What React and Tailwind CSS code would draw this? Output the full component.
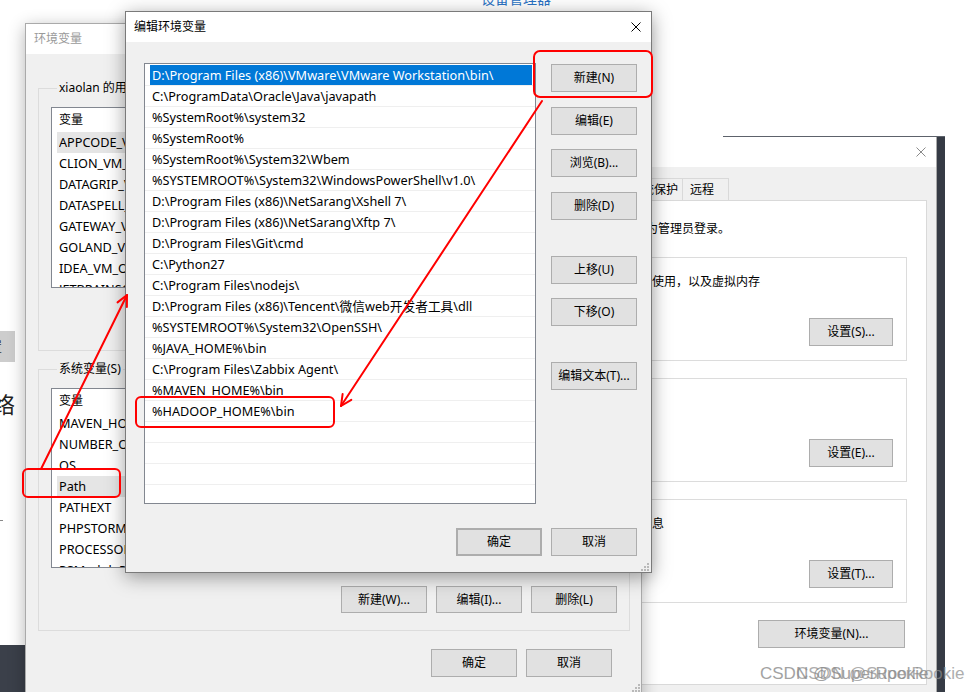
import React from 'react';

const FONT = "font-['Noto_Sans','Noto_Sans_CJK_SC',sans-serif]";

const PATHS = [
  'D:\\Program Files (x86)\\VMware\\VMware Workstation\\bin\\',
  'C:\\ProgramData\\Oracle\\Java\\javapath',
  '%SystemRoot%\\system32',
  '%SystemRoot%',
  '%SystemRoot%\\System32\\Wbem',
  '%SYSTEMROOT%\\System32\\WindowsPowerShell\\v1.0\\',
  'D:\\Program Files (x86)\\NetSarang\\Xshell 7\\',
  'D:\\Program Files (x86)\\NetSarang\\Xftp 7\\',
  'D:\\Program Files\\Git\\cmd',
  'C:\\Python27',
  'C:\\Program Files\\nodejs\\',
  'D:\\Program Files (x86)\\Tencent\\微信web开发者工具\\dll',
  '%SYSTEMROOT%\\System32\\OpenSSH\\',
  '%JAVA_HOME%\\bin',
  'C:\\Program Files\\Zabbix Agent\\',
  '%MAVEN_HOME%\\bin',
  '%HADOOP_HOME%\\bin',
];

const USER_VARS = [
  ['APPCODE_VM_OPTIONS', 'D:\\JetBrains\\vmoptions\\appcode.vmoptions'],
  ['CLION_VM_OPTIONS', 'D:\\JetBrains\\vmoptions\\clion.vmoptions'],
  ['DATAGRIP_VM_OPTIONS', 'D:\\JetBrains\\vmoptions\\datagrip.vmoptions'],
  ['DATASPELL_VM_OPTIONS', 'D:\\JetBrains\\vmoptions\\dataspell.vmoptions'],
  ['GATEWAY_VM_OPTIONS', 'D:\\JetBrains\\vmoptions\\gateway.vmoptions'],
  ['GOLAND_VM_OPTIONS', 'D:\\JetBrains\\vmoptions\\goland.vmoptions'],
  ['IDEA_VM_OPTIONS', 'D:\\JetBrains\\vmoptions\\idea.vmoptions'],
  ['JETBRAINSCLIENT_VM_OPTIONS', 'D:\\JetBrains\\vmoptions\\jetbrainsclient.vmoptions'],
];

const SYS_VARS = [
  ['MAVEN_HOME', 'D:\\apache-maven-3.6.3'],
  ['NUMBER_OF_PROCESSORS', '8'],
  ['OS', 'Windows_NT'],
  ['Path', 'D:\\Program Files (x86)\\VMware\\VMware Workstation\\bin\\;C:\\ProgramData\\...'],
  ['PATHEXT', '.COM;.EXE;.BAT;.CMD;.VBS;.VBE;.JS;.JSE;.WSF;.WSH;.MSC'],
  ['PHPSTORM_VM_OPTIONS', 'D:\\JetBrains\\vmoptions\\phpstorm.vmoptions'],
  ['PROCESSOR_ARCHITECTURE', 'AMD64'],
  ['PSModulePath', '%ProgramFiles%\\WindowsPowerShell\\Modules'],
];

function XIcon({ color }) {
  return (
    <svg width="10" height="10" viewBox="0 0 10 10">
      <path d="M0.5 0.5 L9.5 9.5 M9.5 0.5 L0.5 9.5" stroke={color} strokeWidth="1" fill="none" />
    </svg>
  );
}

function Grip() {
  return (
    <svg width="9" height="9" viewBox="0 0 9 9" fill="#b9b9b9">
      <rect x="7" y="1" width="2" height="2" />
      <rect x="4" y="4" width="2" height="2" />
      <rect x="7" y="4" width="2" height="2" />
      <rect x="1" y="7" width="2" height="2" />
      <rect x="4" y="7" width="2" height="2" />
      <rect x="7" y="7" width="2" height="2" />
    </svg>
  );
}

function Btn({ children, className = '' }) {
  return (
    <div
      className={
        'flex items-center justify-center border border-[#adadad] bg-[#e1e1e1] text-[12px] leading-none text-black whitespace-nowrap ' +
        className
      }
    >
      {children}
    </div>
  );
}

function VarList({ items, selected, className }) {
  return (
    <div className={'border border-[#828790] bg-white overflow-hidden text-[12.7px] text-black ' + className}>
      <div className="h-[24px] flex items-center text-[12px]">
        <div className="w-[180px] shrink-0 h-full pl-[7px] flex items-center border-r border-[#e5e5e5]">变量</div>
        <div className="pl-[7px]">值</div>
      </div>
      {items.map(([k, v], i) => (
        <div key={k} className="h-[21px] pl-[5px]">
          <div
            className={
              (i === selected ? 'bg-[#e5e5e5] ' : '') +
              'h-full flex items-center pl-[2px] pt-[1px] whitespace-nowrap overflow-hidden'
            }
          >
            <span className="w-[178px] shrink-0 overflow-hidden">{k}</span>
            <span className="overflow-hidden">{v}</span>
          </div>
        </div>
      ))}
    </div>
  );
}

function Arrow({ x1, y1, x2, y2 }) {
  const dx = x2 - x1;
  const dy = y2 - y1;
  const L = Math.hypot(dx, dy);
  const ux = dx / L;
  const uy = dy / L;
  const a = Math.PI / 7;
  const len = 12;
  const c = Math.cos(a);
  const s = Math.sin(a);
  const w1x = x2 - len * (ux * c - uy * s);
  const w1y = y2 - len * (uy * c + ux * s);
  const w2x = x2 - len * (ux * c + uy * s);
  const w2y = y2 - len * (uy * c - ux * s);
  return (
    <g stroke="#ff0000" strokeWidth="2" fill="none" strokeLinecap="round" strokeLinejoin="round">
      <line x1={x1} y1={y1} x2={x2} y2={y2} />
      <polyline points={`${w1x},${w1y} ${x2},${y2} ${w2x},${w2y}`} />
    </g>
  );
}

function EditDialog() {
  const stepGaps = ['mt-[1px]', 'mt-[15px]', 'mt-[14px]', 'mt-[15px]', 'mt-[36px]', 'mt-[14px]', 'mt-[36px]'];
  const labels = ['新建(N)', '编辑(E)', '浏览(B)...', '删除(D)', '上移(U)', '下移(O)', '编辑文本(T)...'];
  return (
    <div className="absolute left-[125px] top-[11px] z-30 w-[527px] h-[562px] border border-[#7a7a7a] bg-[#f0f0f0] flex flex-col shadow-[0_4px_18px_rgba(0,0,0,0.38)]">
      <div className="h-[30px] shrink-0 bg-white flex items-center justify-between pl-[8px] pr-[10px] text-[12px] text-black">
        <span>编辑环境变量</span>
        <XIcon color="#000" />
      </div>
      <div className="flex-1 flex flex-col pl-[18px] pr-[14px] pt-[21px]">
        <div className="flex">
          <div className="w-[392px] h-[441px] border border-[#828790] bg-white overflow-hidden pt-[1px] text-[12.7px]">
            {PATHS.map((p, i) => (
              <div key={p} className="h-[21px] border-b border-[#efefef] pl-[5px] pr-[3px]">
                <div
                  className={
                    (i === 0 ? 'bg-[#0078d7] text-white ' : 'text-black ') +
                    'h-full flex items-center pl-[2px] pt-[1px] whitespace-nowrap'
                  }
                >
                  {p}
                </div>
              </div>
            ))}
            {[0, 1, 2, 3].map((k) => (
              <div key={'e' + k} className="h-[21px] border-b border-[#efefef]" />
            ))}
          </div>
          <div className="ml-[15px] w-[86px] flex flex-col">
            {labels.map((l, i) => (
              <Btn key={l} className={'h-[28px] ' + stepGaps[i]}>
                {l}
              </Btn>
            ))}
          </div>
        </div>
        <div className="flex justify-end gap-[9px] mt-[24px]">
          <Btn className="w-[86px] h-[28px] border-2 border-[#0078d7]">确定</Btn>
          <Btn className="w-[86px] h-[28px]">取消</Btn>
        </div>
      </div>
      <div className="absolute right-[2px] bottom-[1px]">
        <Grip />
      </div>
    </div>
  );
}

function EnvWindow() {
  return (
    <div className="absolute left-[25px] top-[23px] z-20 w-[617px] h-[690px] border border-[#aaaaaa] bg-[#f0f0f0] flex flex-col shadow-[0_4px_16px_rgba(0,0,0,0.3)]">
      <div className="h-[30px] shrink-0 bg-white flex items-center pl-[8px] text-[12px] text-[#9a9a9a]">环境变量</div>
      <div className="flex flex-col pl-[12px] pr-[11px] text-[12px] text-black">
        <fieldset className="min-w-0 mt-[26px] border border-[#dcdcdc] px-[12px] pb-[17px]">
          <legend className="ml-[6px] px-[2px] leading-[16px] whitespace-nowrap">xiaolan 的用户变量(U)</legend>
          <VarList items={USER_VARS} selected={0} className="mt-[11px] h-[181px]" />
          <div className="mt-[18px] flex justify-end gap-[9px]">
            <Btn className="w-[86px] h-[27px]">新建(N)...</Btn>
            <Btn className="w-[86px] h-[27px]">编辑(E)...</Btn>
            <Btn className="w-[86px] h-[27px]">删除(D)</Btn>
          </div>
        </fieldset>
        <fieldset className="min-w-0 mt-[10px] border border-[#dcdcdc] px-[12px] pb-[17px]">
          <legend className="ml-[6px] px-[2px] leading-[16px] whitespace-nowrap">系统变量(S)</legend>
          <VarList items={SYS_VARS} selected={3} className="mt-[11px] h-[180px]" />
          <div className="mt-[18px] flex justify-end gap-[9px]">
            <Btn className="w-[86px] h-[27px]">新建(W)...</Btn>
            <Btn className="w-[86px] h-[27px]">编辑(I)...</Btn>
            <Btn className="w-[86px] h-[27px]">删除(L)</Btn>
          </div>
        </fieldset>
        <div className="mt-[18px] pr-[18px] flex justify-end gap-[9px]">
          <Btn className="w-[86px] h-[28px]">确定</Btn>
          <Btn className="w-[86px] h-[28px]">取消</Btn>
        </div>
      </div>
      <div className="absolute left-[605px] top-[659px]">
        <Grip />
      </div>
    </div>
  );
}

function SysGroup({ title, text, button, className = '' }) {
  return (
    <fieldset className={'min-w-0 ml-[3px] mr-[19px] border border-[#dcdcdc] pl-[10px] pr-[13px] pb-[14px] ' + className}>
      <legend className="ml-[6px] px-[2px] leading-[16px]">{title}</legend>
      <div className="mt-[9px] leading-[16px] whitespace-nowrap">{text}</div>
      <div className="mt-[28px] flex justify-end">
        <Btn className="w-[84px] h-[28px]">{button}</Btn>
      </div>
    </fieldset>
  );
}

function SysProps() {
  return (
    <div className="absolute left-[462px] top-[137px] z-10 w-[475px] h-[600px] border-x border-[#aaaaaa] bg-[#f0f0f0] flex flex-col text-[12px] text-black">
      <div className="h-[30px] shrink-0 bg-white flex items-center justify-between pl-[8px] pr-[10px]">
        <span className="text-[#9a9a9a]">系统属性</span>
        <XIcon color="#8a8a8a" />
      </div>
      <div className="mt-[11px] ml-[11px] flex h-[22px]">
        <div className="w-[60px] border border-b-0 border-[#d9d9d9] flex items-center justify-center">计算机名</div>
        <div className="w-[44px] border border-b-0 border-l-0 border-[#d9d9d9] flex items-center justify-center">硬件</div>
        <div className="w-[45px] border border-b-0 border-l-0 border-[#d9d9d9] bg-white flex items-center justify-center">高级</div>
        <div className="w-[60px] border border-b-0 border-l-0 border-[#d9d9d9] flex items-center pl-[7px]">系统保护</div>
        <div className="w-[46px] border border-b-0 border-l-0 border-[#d9d9d9] flex items-center pl-[7px]">远程</div>
      </div>
      <div className="ml-[9px] mr-[9px] h-[485px] border border-[#d9d9d9] bg-white pl-[17px] pt-[20px] flex flex-col">
        <div className="leading-[16px] whitespace-nowrap">要进行大多数更改，你必须作为管理员登录。</div>
        <div className="-ml-[8px] flex flex-col">
          <SysGroup className="mt-[12px]" title="性能" text="视觉效果，处理器计划，内存使用，以及虚拟内存" button="设置(S)..." />
          <SysGroup className="mt-[9px]" title="用户配置文件" text="与登录帐户相关的桌面设置" button="设置(E)..." />
          <SysGroup className="mt-[9px]" title="启动和故障恢复" text="系统启动、系统故障和调试信息" button="设置(T)..." />
          <div className="mt-[17px] mr-[21px] flex justify-end">
            <Btn className="w-[147px] h-[28px]">环境变量(N)...</Btn>
          </div>
        </div>
      </div>
    </div>
  );
}

export default function App() {
  return (
    <div className={'relative w-[980px] h-[692px] overflow-hidden bg-white ' + FONT}>
      {/* desktop / page behind */}
      <div className="absolute inset-0 flex">
        <div className="w-[25px] flex flex-col">
          <div className="mt-[331px] h-[31px] w-[15px] bg-[#cdcdcd] overflow-hidden flex items-center">
            <span className="-ml-[11px] text-[13px] text-[#333] leading-none">置</span>
          </div>
          <div className="mt-[31px] -ml-[7px] text-[22px] leading-[22px] text-[#222]">络</div>
          <div className="mt-[105px] h-[1px] w-[3px] bg-[#888]" />
          <div className="flex-1" />
          <div className="h-[47px] bg-[#3b404a]" />
        </div>
        <div className="flex-1 flex flex-col">
          <div className="-mt-[9px] ml-[456px] text-[14px] leading-[16px] text-[#2a72c4]">设备管理器</div>
          <div className="mt-[129px] ml-[698px] w-[222px] flex-1 bg-[#363b45] border-t border-[#5d626b]" />
        </div>
      </div>

      <SysProps />
      <EnvWindow />
      <EditDialog />

      <svg className="absolute inset-0 z-40 pointer-events-none" width="980" height="692">
        <g stroke="#ff0000" strokeWidth="2" fill="none">
          <rect x="534" y="51" width="118" height="46" rx="6" />
          <rect x="136" y="397" width="198" height="30" rx="5" />
          <rect x="23" y="469" width="97" height="28" rx="5" />
        </g>
        <Arrow x1={542} y1={101} x2={341} y2={406} />
        <Arrow x1={41} y1={469} x2={127} y2={295} />
      </svg>

      <div className="absolute left-[760px] top-[664px] z-50 flex font-['Liberation_Sans',Arial,sans-serif] text-[17px] leading-[20px] text-[#8c8c8c] opacity-80 whitespace-nowrap">
        <span>CSDN @SuperRookie</span>
      </div>
      <div className="absolute left-[796px] top-[664px] z-50 flex font-['Liberation_Sans',Arial,sans-serif] text-[17px] leading-[20px] text-[#8c8c8c] opacity-70 whitespace-nowrap">
        <span>CSDN @SuperRookie</span>
      </div>
    </div>
  );
}
